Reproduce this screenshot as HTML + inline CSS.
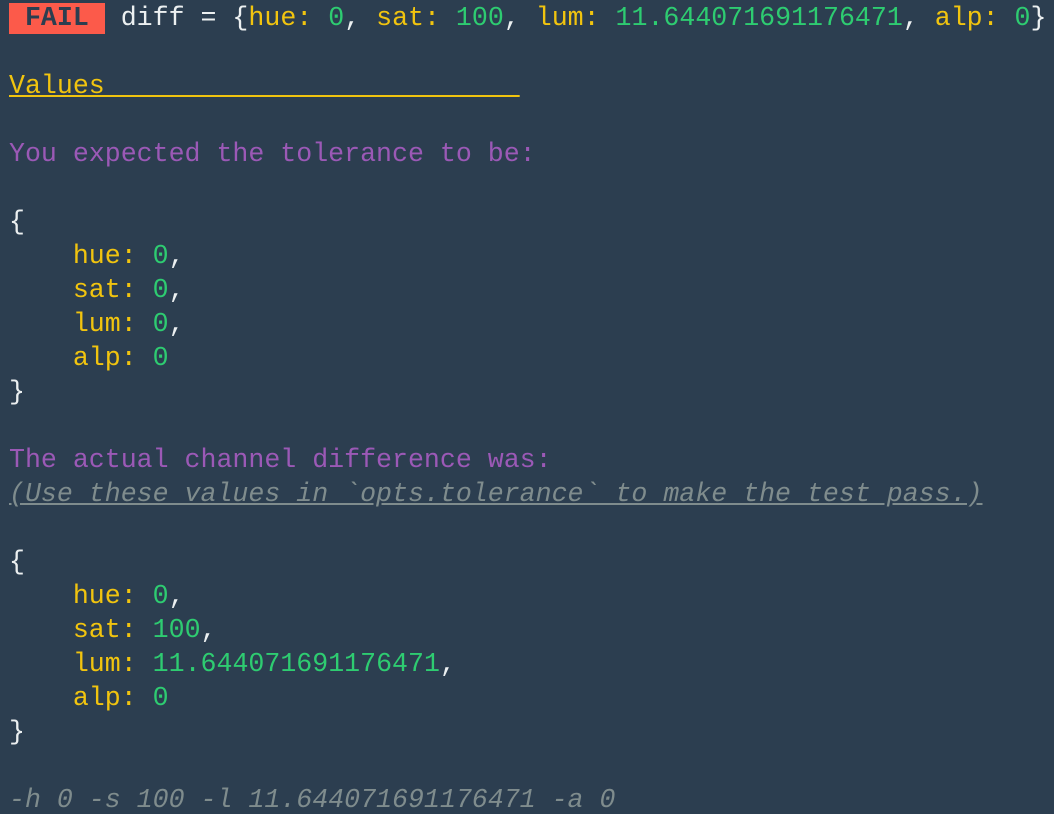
<!DOCTYPE html>
<html><head><meta charset="utf-8"><style>
html,body{margin:0;padding:0;background:#2c3e50;width:1054px;height:814px;overflow:hidden}
pre{margin:0;padding:1px 0 0 9px;font-family:"Liberation Mono",monospace;font-size:26.6px;line-height:34px;color:#ecf0f1;white-space:pre}
.f{background:#fc5a4a;color:#2c3e50;display:inline-block;line-height:31px;font-weight:bold}
.y{color:#f1c40f}.g{color:#2ecc71}.p{color:#9b59b6}.gr{color:#7f8c8d;font-style:italic;text-decoration:underline}
.u{color:#f1c40f;text-decoration:underline}
.i{color:#7f8c8d;font-style:italic}
</style></head><body><pre><span class="f"> FAIL </span> diff = {<span class="y">hue:</span> <span class="g">0</span>, <span class="y">sat:</span> <span class="g">100</span>, <span class="y">lum:</span> <span class="g">11.644071691176471</span>, <span class="y">alp:</span> <span class="g">0</span>}

<span class="u">Values                          </span>

<span class="p">You expected the tolerance to be:</span>

{
    <span class="y">hue:</span> <span class="g">0</span>,
    <span class="y">sat:</span> <span class="g">0</span>,
    <span class="y">lum:</span> <span class="g">0</span>,
    <span class="y">alp:</span> <span class="g">0</span>
}

<span class="p">The actual channel difference was:</span>
<span class="gr">(Use these values in `opts.tolerance` to make the test pass.)</span>

{
    <span class="y">hue:</span> <span class="g">0</span>,
    <span class="y">sat:</span> <span class="g">100</span>,
    <span class="y">lum:</span> <span class="g">11.644071691176471</span>,
    <span class="y">alp:</span> <span class="g">0</span>
}

<span class="i">-h 0 -s 100 -l 11.644071691176471 -a 0</span></pre></body></html>
